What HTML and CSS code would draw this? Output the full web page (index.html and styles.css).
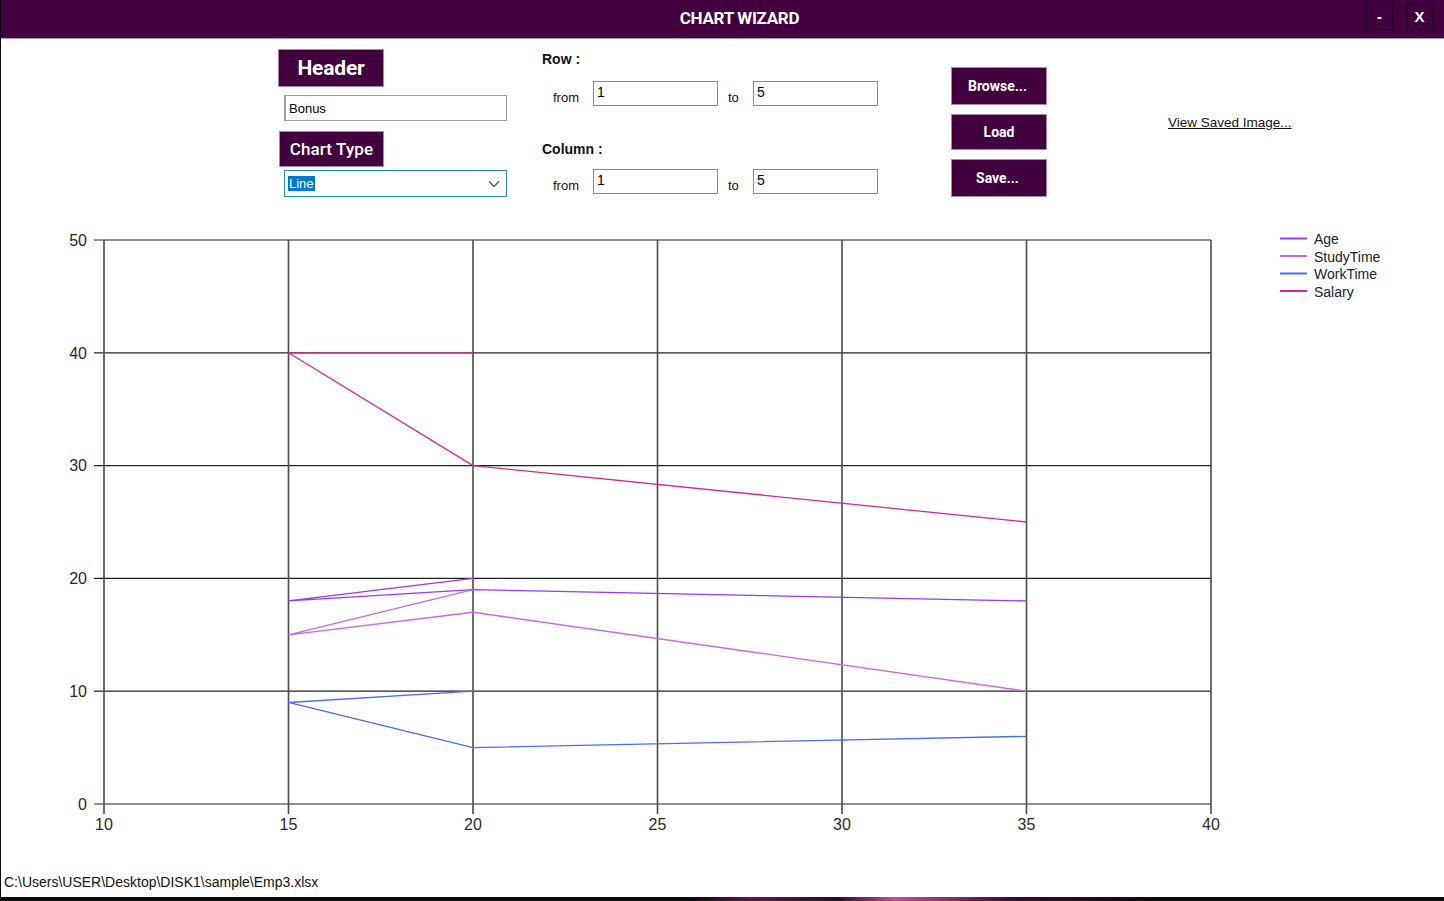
FILE: index.html
```html
<!DOCTYPE html>
<html>
<head>
<meta charset="utf-8">
<link rel="stylesheet" href="styles.css">
</head>
<body>
<div class="window">
  <div class="titlebar">
    <div class="title">CHART WIZARD</div>
    <div class="winbtns">
      <div class="winbtn">-</div>
      <div class="winbtn">X</div>
    </div>
  </div>
  <div class="form">
    <div class="col1">
      <div class="tag tag-header">Header</div>
      <div class="field field-bonus">Bonus</div>
      <div class="tag tag-type">Chart Type</div>
      <div class="combo"><span class="sel">Line</span>
        <svg class="caret" width="12" height="8" viewBox="0 0 12 8"><path d="M1 1.5 L6 6.5 L11 1.5" fill="none" stroke="#444" stroke-width="1.2"/></svg>
      </div>
    </div>
    <div class="col2">
      <div class="lbl">Row :</div>
      <div class="range">
        <span class="from">from</span><div class="field small">1</div>
        <span class="to">to</span><div class="field small">5</div>
      </div>
      <div class="lbl lbl-col">Column :</div>
      <div class="range range2">
        <span class="from">from</span><div class="field small">1</div>
        <span class="to">to</span><div class="field small">5</div>
      </div>
    </div>
    <div class="col3">
      <div class="btn btn-browse">Browse...</div>
      <div class="btn btn-load">Load</div>
      <div class="btn btn-save">Save...</div>
    </div>
    <div class="col4">
      <span class="link">View Saved Image...</span>
    </div>
  </div>
  <svg class="chart" width="1443" height="640" viewBox="0 0 1443 640">
    <g class="grid" stroke="#222" stroke-width="1.2" fill="none">
      <line x1="94" y1="20" x2="1211" y2="20"/>
      <line x1="94" y1="132.8" x2="1211" y2="132.8"/>
      <line x1="94" y1="245.6" x2="1211" y2="245.6"/>
      <line x1="94" y1="358.4" x2="1211" y2="358.4"/>
      <line x1="94" y1="471.2" x2="1211" y2="471.2"/>
      <line x1="94" y1="584" x2="1211" y2="584"/>
    </g>
    <g class="grid" stroke="#4a4a4a" stroke-width="1.6" fill="none">
      <line x1="104" y1="20" x2="104" y2="594"/>
      <line x1="288.5" y1="20" x2="288.5" y2="594"/>
      <line x1="473" y1="20" x2="473" y2="594"/>
      <line x1="657.5" y1="20" x2="657.5" y2="594"/>
      <line x1="842" y1="20" x2="842" y2="594"/>
      <line x1="1026.5" y1="20" x2="1026.5" y2="594"/>
      <line x1="1211" y1="20" x2="1211" y2="594"/>
    </g>
    <g class="ylab" font-size="16" fill="#2a2a2a" text-anchor="end">
      <text x="87" y="25.5">50</text>
      <text x="87" y="138.5">40</text>
      <text x="87" y="251">30</text>
      <text x="87" y="364">20</text>
      <text x="87" y="477">10</text>
      <text x="87" y="590">0</text>
    </g>
    <g class="xlab" font-size="16" fill="#2a2a2a" text-anchor="middle">
      <text x="104" y="610">10</text>
      <text x="288.5" y="610">15</text>
      <text x="473" y="610">20</text>
      <text x="657.5" y="610">25</text>
      <text x="842" y="610">30</text>
      <text x="1026.5" y="610">35</text>
      <text x="1211" y="610">40</text>
    </g>
    <g fill="none" stroke-width="1.3" stroke-linejoin="round">
      <polyline stroke="#d12a95" points="288.5,132.8 473,132.8 288.5,132.8 473,245.6 1026.5,302"/>
      <polyline stroke="#9a3be6" points="288.5,380.96 473,358.4 288.5,380.96 473,369.68 1026.5,380.96"/>
      <polyline stroke="#c56ce0" points="288.5,414.8 473,369.68 288.5,414.8 473,392.24 1026.5,471.2"/>
      <polyline stroke="#4a6fe8" points="288.5,482.48 473,471.2 288.5,482.48 473,527.6 1026.5,516.32"/>
    </g>
    <g class="legend" font-size="14" fill="#222">
      <line x1="1280" y1="18.5" x2="1307" y2="18.5" stroke="#9a3be6" stroke-width="2"/>
      <text x="1314" y="24">Age</text>
      <line x1="1280" y1="36" x2="1307" y2="36" stroke="#c56ce0" stroke-width="2"/>
      <text x="1314" y="41.5">StudyTime</text>
      <line x1="1280" y1="53.5" x2="1307" y2="53.5" stroke="#4a6fe8" stroke-width="2"/>
      <text x="1314" y="59">WorkTime</text>
      <line x1="1280" y1="71" x2="1307" y2="71" stroke="#d12a95" stroke-width="2"/>
      <text x="1314" y="76.5">Salary</text>
    </g>
  </svg>
  <div class="status">C:\Users\USER\Desktop\DISK1\sample\Emp3.xlsx</div>
  <div class="taskstrip"></div>
</div>
</body>
</html>
```

FILE: styles.css
```css
* { box-sizing: border-box; }
html, body {
  margin: 0;
  padding: 0;
  width: 1444px;
  height: 901px;
  overflow: hidden;
  background: #fff;
}
body {
  font-family: "Liberation Sans", Arial, sans-serif;
  color: #111;
}
.window {
  width: 1444px;
  height: 901px;
  border-left: 1px solid #0a0a0a;
  display: flex;
  flex-direction: column;
}
.titlebar {
  height: 39px;
  flex: none;
  background: #42003e;
  border-bottom: 1px solid #b79bb5;
  display: flex;
  align-items: center;
  justify-content: center;
  position: relative;
}
.title {
  font-family: "Roboto", sans-serif;
  font-weight: 700;
  font-size: 17px;
  color: #fff;
  letter-spacing: -0.3px;
  margin-left: 34px;
  margin-top: -2px;
}
.winbtns {
  position: absolute;
  right: 11px;
  top: 3px;
  display: flex;
  gap: 13px;
}
.winbtn {
  width: 27px;
  height: 27px;
  border: 1px solid #1c0019;
  color: #fff;
  font-family: "Liberation Sans", sans-serif;
  font-weight: 700;
  font-size: 15px;
  display: flex;
  align-items: center;
  justify-content: center;
}
.form {
  height: 181px;
  flex: none;
  display: flex;
  padding-left: 277px;
}
.col1 {
  width: 230px;
  padding-top: 10px;
  display: flex;
  flex-direction: column;
  align-items: flex-start;
}
.tag {
  background: #42003e;
  border: 1px solid #a88aa6;
  color: #fff;
  font-family: "Roboto", sans-serif;
  font-weight: 700;
  display: flex;
  align-items: center;
  justify-content: center;
}
.tag-header {
  width: 106px;
  height: 38px;
  font-size: 21px;
  letter-spacing: -0.2px;
}
.tag-type {
  width: 105px;
  height: 36px;
  font-size: 17px;
  font-weight: 500;
  margin-top: 10px;
  margin-left: 1px;
  letter-spacing: 0.1px;
}
.field {
  border: 1px solid #8a8a8a;
  background: #fff;
  font-size: 13px;
  color: #000;
  display: flex;
  align-items: center;
  padding-left: 3px;
}
.field-bonus {
  width: 223px;
  height: 26px;
  margin-top: 8px;
  margin-left: 6px;
  border-color: #a0a0a0;
  border-width: 1px 1px 1px 2px;
}
.combo {
  width: 223px;
  height: 27px;
  margin-top: 3px;
  margin-left: 6px;
  border: 1px solid #2b88d8;
  display: flex;
  align-items: center;
  justify-content: space-between;
  padding: 0 6px 0 3px;
  font-size: 13px;
}
.sel {
  background: #0078d7;
  color: #fff;
  padding: 0 1px;
  line-height: 15px;
}
.col2 {
  width: 409px;
  margin-left: 34px;
  padding-top: 12px;
}
.lbl {
  font-weight: 700;
  font-size: 14px;
  height: 16px;
  line-height: 16px;
}
.lbl-col {
  margin-top: 35px;
}
.range {
  display: flex;
  align-items: center;
  margin-top: 14px;
  font-size: 13px;
}
.range2 {
  margin-top: 12px;
}
.from {
  width: 51px;
  padding-left: 11px;
  padding-top: 8px;
}
.to {
  width: 35px;
  padding-left: 10px;
  padding-top: 8px;
}
.field.small {
  width: 125px;
  height: 25px;
  align-items: flex-start;
  padding-top: 2px;
  font-size: 14px;
}
.col3 {
  width: 95px;
  padding-top: 28px;
  display: flex;
  flex-direction: column;
}
.btn {
  width: 96px;
  background: #42003e;
  border: 1px solid #a88aa6;
  color: #fff;
  font-family: "Roboto", sans-serif;
  font-weight: 700;
  font-size: 14px;
  display: flex;
  align-items: center;
  justify-content: center;
}
.btn-browse { height: 38px; padding-right: 3px; }
.btn-load { height: 36px; margin-top: 9px; }
.btn-save { height: 38px; margin-top: 9px; padding-right: 3px; }
.col4 {
  margin-left: 122px;
  padding-top: 74px;
}
.link {
  font-size: 13.5px;
  color: #111;
  text-decoration: underline;
}
.chart {
  display: block;
  flex: none;
  margin-left: -1px;
  font-family: "Liberation Sans", Arial, sans-serif;
}
.status {
  flex: 1;
  font-size: 14px;
  color: #111;
  padding-left: 3px;
  padding-top: 14px;
}
.taskstrip {
  height: 4px;
  flex: none;
  margin-left: -1px;
  background: linear-gradient(90deg, #0b0b0b 0%, #0b0b0b 48%, #5a1a4a 52%, #2a0a24 58%, #c050a0 62%, #3a0a30 70%, #0b0b0b 80%);
}
```
